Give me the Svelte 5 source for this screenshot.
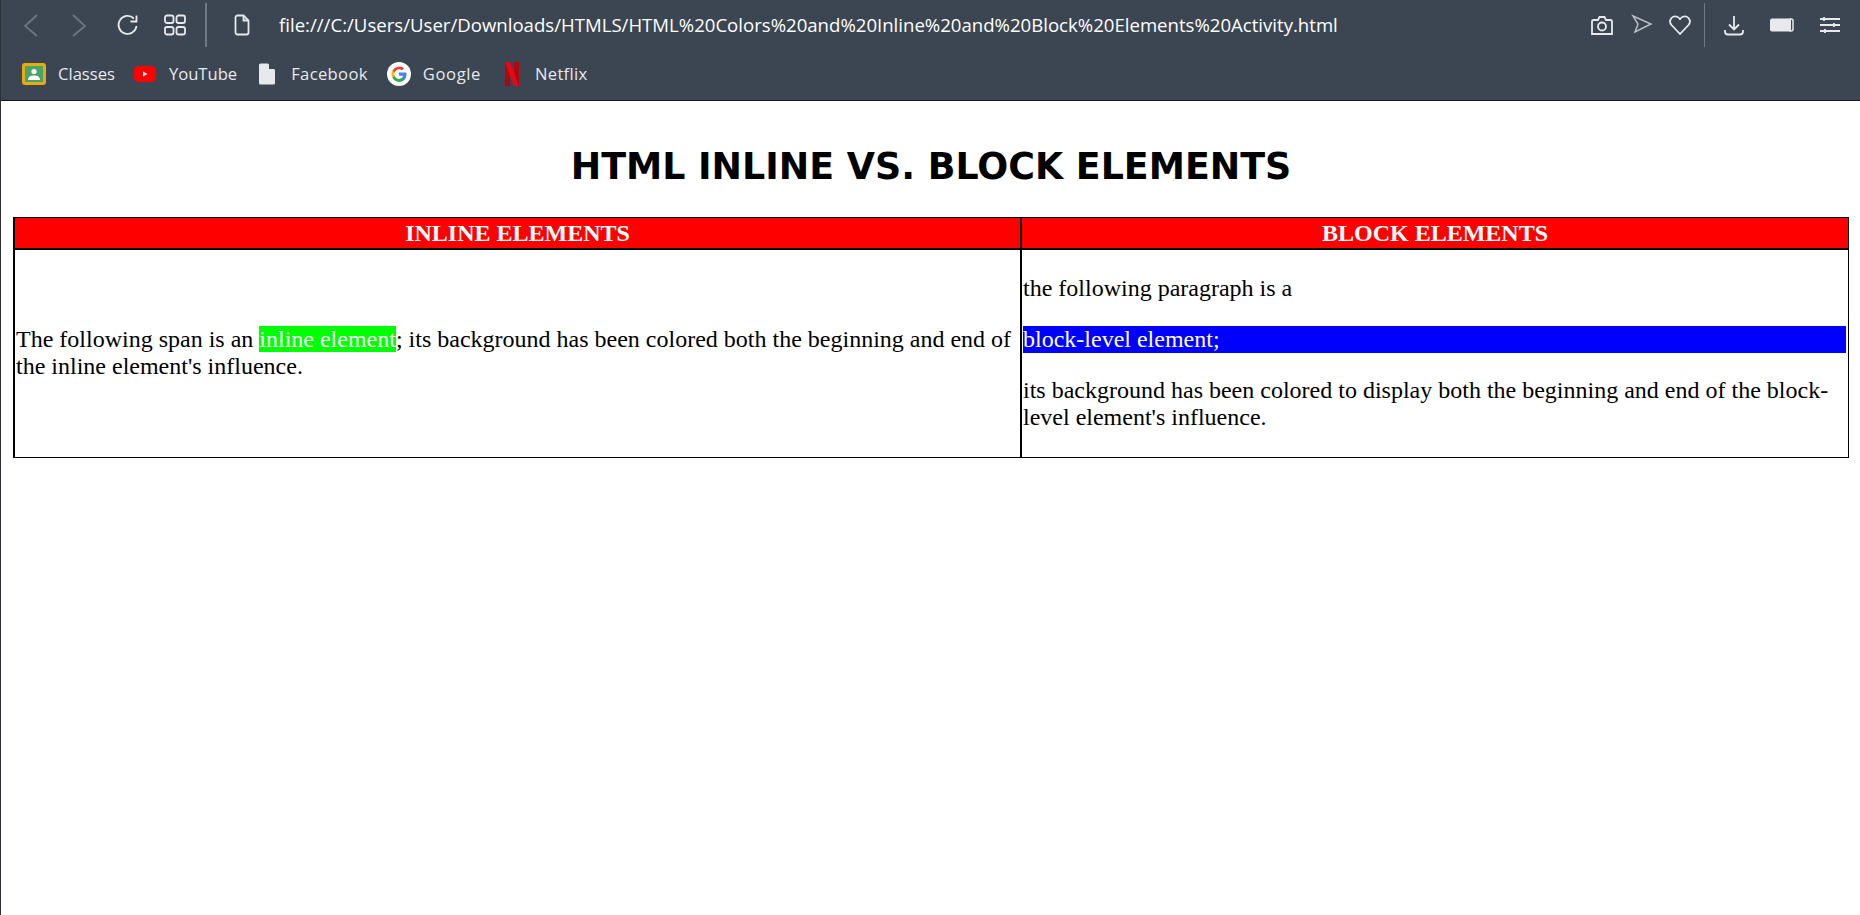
<script>
	const bookmarks = ['Classes', 'YouTube', 'Facebook', 'Google', 'Netflix'];
</script>

<div class="window">
	<header class="chrome">
		<div class="toolbar">
			<svg class="ico back" viewBox="0 0 20 24" width="20" height="24"><path d="M16 2 L4 13 L16 23" /></svg>
			<svg class="ico fwd" viewBox="0 0 20 24" width="20" height="24"><path d="M4 2 L16 13 L4 23" /></svg>
			<svg class="ico reload" viewBox="0 0 24 24" width="24" height="24"><path d="M20.500 13a9 9 0 1 1-2.600-7.500" /><path d="M20.500 2.500v6h-6" /></svg>
			<svg class="ico grid" viewBox="0 0 24 24" width="24" height="24">
				<rect x="2" y="2.500" width="8.500" height="7.500" rx="2" />
				<rect x="13.500" y="2.500" width="8.500" height="7.500" rx="2" />
				<rect x="2" y="14" width="8.500" height="7.500" rx="2" />
				<rect x="13.500" y="14" width="8.500" height="7.500" rx="2" />
			</svg>
			<span class="sep"></span>
			<svg class="ico doc" viewBox="0 0 18 22" width="18" height="22"><path d="M2.500 3.500a2 2 0 0 1 2-2h6l5 5v12a2 2 0 0 1-2 2h-9a2 2 0 0 1-2-2z" /><path d="M10.500 1.500v5h5" /></svg>
			<div class="url">file:///C:/Users/User/Downloads/HTMLS/HTML%20Colors%20and%20Inline%20and%20Block%20Elements%20Activity.html</div>
			<svg class="ico" viewBox="0 0 24 24" width="24" height="24"><path d="M2 8.500a1.500 1.500 0 0 1 1.500-1.500H8l1.500-3h5l1.500 3h4.500a1.500 1.500 0 0 1 1.500 1.500V21H2z" /><circle cx="12" cy="13.500" r="4" /></svg>
			<svg class="ico send" viewBox="0 0 22 22" width="22" height="22"><path d="M2 2 L20 10 L4 18 L7 10 Z" /></svg>
			<svg class="ico heart" viewBox="0 0 24 24" width="24" height="24"><path d="M12 21 L3.500 12a5.500 5.500 0 0 1 0-7 5 5 0 0 1 7.500 0l1 1.200 1-1.200a5 5 0 0 1 7.500 0 5.500 5.500 0 0 1 0 7z" /></svg>
			<span class="sep thin"></span>
			<svg class="ico download" viewBox="0 0 22 24" width="22" height="24"><path d="M11 3v13M6 11.500l5 5 5-5" /><path d="M2 17v1.500a3 3 0 0 0 3 3h12a3 3 0 0 0 3-3V17" /></svg>
			<svg class="battery" viewBox="0 0 24 14" width="24" height="14"><rect x="0" y="0.500" width="21" height="13" rx="2" fill="#e7e9ec" /><path d="M20 1h1a2 2 0 0 1 2 2v8a2 2 0 0 1-2 2h-1z" fill="none" stroke="#e7e9ec" stroke-width="1.500" /></svg>
			<svg class="ico sliders" viewBox="0 0 20 18" width="20" height="18"><path d="M0 3h20M0 9h20M0 15h20M4 1v4M14 7v4M5 13v4" /></svg>
		</div>
		<nav class="bookmarks">
			{#each bookmarks as b}
				<div class="bookmark {b.toLowerCase()}">
					{#if b === 'Classes'}
						<svg viewBox="0 0 24 22" width="24" height="22"><rect x="1.500" y="1.500" width="21" height="19" rx="1.500" fill="#4aa564" stroke="#e8ab12" stroke-width="3" /><circle cx="12" cy="8.500" r="2.600" fill="#fff" /><path d="M6 17c0-3.200 2.500-4.500 6-4.500s6 1.300 6 4.500z" fill="#fff" /></svg>
					{:else if b === 'YouTube'}
						<svg viewBox="0 0 24 18" width="24" height="18"><rect x="1" y="1" width="22" height="16" rx="4.500" fill="#f00" /><path d="M10 6.500l4.500 2.500L10 11.500z" fill="#fff" /></svg>
					{:else if b === 'Facebook'}
						<svg viewBox="0 0 18 22" width="18" height="22"><path d="M1 2a1.500 1.500 0 0 1 1.500-1.500H10L17 7v13a1.500 1.500 0 0 1-1.500 1.500h-13A1.500 1.500 0 0 1 1 20z" fill="#e7e9ec" /><path d="M11 .5v5.500h6z" fill="#3b4652" /></svg>
					{:else if b === 'Google'}
						<svg viewBox="0 0 24 24" width="24" height="24">
							<circle cx="12" cy="12" r="12" fill="#fff" />
							<path d="M19.500 12.200c0-.6-.1-1.200-.2-1.700H12v3.200h4.200a3.600 3.600 0 0 1-1.600 2.400v2h2.600c1.500-1.400 2.300-3.400 2.300-5.900z" fill="#4285f4" />
							<path d="M12 20c2.200 0 4-.7 5.200-1.900l-2.600-2c-.7.500-1.500.8-2.600.8-2 0-3.800-1.400-4.400-3.200H5.500v2.100A8 8 0 0 0 12 20z" fill="#34a853" />
							<path d="M7.600 13.700a4.800 4.800 0 0 1 0-3.100V8.500H5.500a8 8 0 0 0 0 7.300z" fill="#fbbc05" />
							<path d="M12 7.200c1.200 0 2.200.4 3 1.200l2.200-2.300A8 8 0 0 0 5.500 8.500l2.100 2.100C8.200 8.600 10 7.200 12 7.200z" fill="#ea4335" />
						</svg>
					{:else}
						<svg viewBox="0 0 16 24" width="16" height="24"><path d="M1 0h5v24l-5 .5z" fill="#b1060f" /><path d="M10 0h5v24.500l-5-.5z" fill="#b1060f" /><path d="M1 0h5l9 24.500-5-.5z" fill="#e50914" /></svg>
					{/if}
					<span>{b}</span>
				</div>
			{/each}
		</nav>
	</header>

	<main class="page">
		<h1>HTML INLINE VS. BLOCK ELEMENTS</h1>
		<table>
			<thead>
				<tr>
					<th class="left">INLINE ELEMENTS</th>
					<th class="right">BLOCK ELEMENTS</th>
				</tr>
			</thead>
			<tbody>
				<tr>
					<td>The following span is an <span class="inline">inline element</span>; its background has been colored both the beginning and end of the inline element's influence.</td>
					<td class="right">
						<p>the following paragraph is a</p>
						<p class="block">block-level element;</p>
						<p>its background has been colored to display both the beginning and end of the block-level element's influence.</p>
					</td>
				</tr>
			</tbody>
		</table>
	</main>
</div>

<style>
	:global(body) {
		background: #fff;
	}

	.window {
		min-height: 915px;
		box-sizing: border-box;
		border-left: 1px solid #2d3138;
	}

	.chrome {
		height: 101px;
		box-sizing: border-box;
		background: #3b4652;
		border-bottom: 1px solid #16191d;
		font-family: "Open Sans", sans-serif;
		color: #e7e9ec;
	}

	.toolbar {
		display: flex;
		align-items: center;
		height: 50px;
		box-sizing: border-box;
	}

	.ico {
		fill: none;
		stroke: #e7e9ec;
		stroke-width: 1.800;
		flex: none;
	}

	.ico.back {
		margin-left: 20px;
		stroke: #6d7782;
	}

	.ico.fwd {
		margin-left: 28px;
		stroke: #6d7782;
	}

	.ico.reload {
		margin-left: 27px;
	}

	.ico.grid {
		margin-left: 23px;
	}

	.sep {
		width: 2px;
		height: 44px;
		background: #707983;
		margin-left: 18px;
		flex: none;
	}

	.sep.thin {
		width: 1px;
		margin-left: 12px;
	}

	.ico.doc {
		margin-left: 26px;
	}

	.url {
		flex: 1;
		margin: 0 0 2px 28px;
		font-size: 18.600px;
		color: #fff;
		white-space: nowrap;
	}

	.ico.send {
		margin-left: 17px;
		stroke: #b9bfc6;
		stroke-width: 1.500;
	}

	.ico.heart {
		margin-left: 15px;
	}

	.ico.download {
		margin-left: 18px;
	}

	.battery {
		margin-left: 25px;
		flex: none;
	}

	.ico.sliders {
		margin: 0 20px 0 26px;
	}

	.bookmarks {
		display: flex;
		align-items: center;
		height: 47px;
		padding-left: 21px;
		font-size: 16.600px;
	}

	.bookmark {
		display: flex;
		align-items: center;
		gap: 12px;
	}

	.bookmark svg {
		flex: none;
	}

	.youtube {
		margin-left: 18px;
	}

	.facebook {
		margin-left: 21px;
		gap: 15px;
		letter-spacing: 0.350px;
	}

	.google {
		margin-left: 19px;
		gap: 12px;
		letter-spacing: 0.600px;
	}

	.netflix {
		margin-left: 23px;
		gap: 15px;
		letter-spacing: 0.300px;
	}

	.page {
		padding: 0 11px 0 12px;
	}

	h1 {
		margin: 0;
		padding: 46px 0 30px;
		text-align: center;
		font-family: "DejaVu Sans", sans-serif;
		font-size: 36.400px;
		line-height: 40px;
		font-weight: 700;
		color: #000;
	}

	table {
		width: 100%;
		border-collapse: collapse;
		table-layout: fixed;
		font-family: "Liberation Serif", serif;
		font-size: 24px;
		line-height: 27px;
		color: #000;
	}

	th {
		background: #f00;
		color: #fff;
		font-weight: 700;
		padding: 2px 1px 1px;
		border: 2px solid #000;
		border-top-width: 1px;
	}

	th.left {
		width: 1003px;
	}

	td {
		border: 2px solid #000;
		border-bottom-width: 1px;
		padding: 1px 1px 3px;
		vertical-align: middle;
	}

	th.right,
	td.right {
		border-right-width: 1px;
	}

	td.right {
		padding: 1px 2px 2px 1px;
	}

	.inline {
		background: #0f0;
		color: #fff;
	}

	p {
		margin: 24px 0;
	}

	.block {
		background: #00f;
		color: #fff;
	}
</style>
